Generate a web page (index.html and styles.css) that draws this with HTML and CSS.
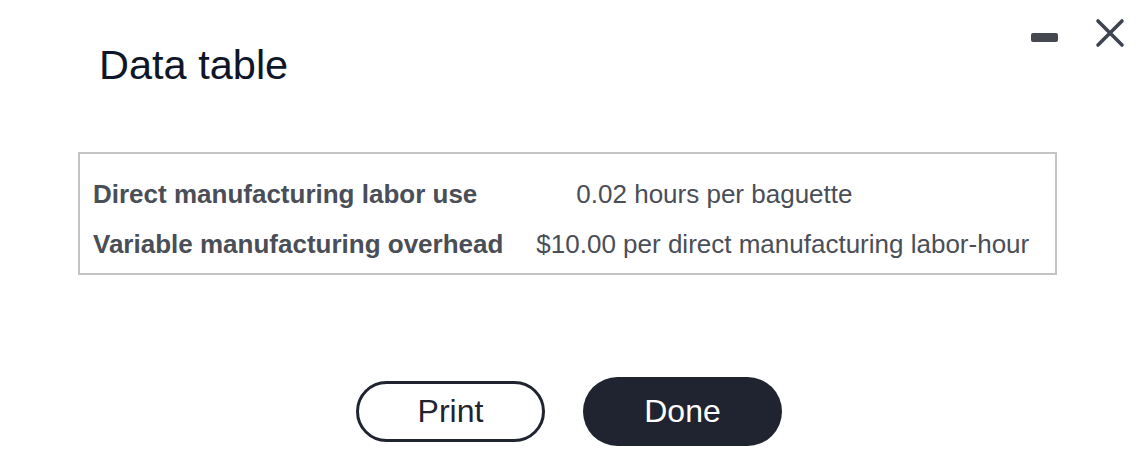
FILE: index.html
```html
<!DOCTYPE html>
<html>
<head>
<meta charset="utf-8">
<link rel="stylesheet" href="styles.css">
</head>
<body>
<div class="dialog">
  <div class="header">
    <h1 class="title">Data table</h1>
    <div class="controls">
      <span class="minimize"></span>
      <svg class="close" width="30" height="30" viewBox="0 0 30 30">
        <path d="M3 3 L27 27 M27 3 L3 27" stroke="#3e4550" stroke-width="3.6" stroke-linecap="round" fill="none"/>
      </svg>
    </div>
  </div>
  <div class="table">
    <div class="label">Direct manufacturing labor use</div>
    <div class="value first">0.02 hours per baguette</div>
    <div class="label">Variable manufacturing overhead</div>
    <div class="value">$10.00 per direct manufacturing labor-hour</div>
  </div>
  <div class="actions">
    <button class="btn print">Print</button>
    <button class="btn done">Done</button>
  </div>
</div>
</body>
</html>
```
FILE: styles.css
```css
html, body {
  margin: 0;
  padding: 0;
  background: #fff;
  font-family: "Liberation Sans", Arial, sans-serif;
}
.dialog {
  width: 1138px;
  height: 468px;
  box-sizing: border-box;
}
.header {
  display: flex;
  justify-content: space-between;
  align-items: flex-start;
}
.title {
  margin: 41px 0 0 99px;
  font-size: 41.5px;
  font-weight: normal;
  color: #0f1628;
  line-height: 48px;
}
.controls {
  display: flex;
  align-items: flex-start;
  gap: 37px;
  margin: 18px 13px 0 0;
}
.minimize {
  display: block;
  width: 27px;
  height: 9px;
  border-radius: 2px;
  background: #45484e;
  margin-top: 15px;
}
.close {
  display: block;
}
.table {
  margin: 63px 0 0 78px;
  width: 979px;
  height: 123px;
  box-sizing: border-box;
  border: 2px solid #c4c4c4;
  display: grid;
  grid-template-columns: auto 1fr;
  column-gap: 33px;
  row-gap: 24px;
  align-content: start;
  padding: 27px 12px 0 13px;
  color: #4a4e57;
  font-size: 26px;
  line-height: 26px;
}
.label {
  font-weight: bold;
}
.value.first {
  padding-left: 40px;
}
.actions {
  display: flex;
  justify-content: center;
  align-items: center;
  gap: 38px;
  margin-top: 102px;
}
.btn {
  font-family: "Liberation Sans", Arial, sans-serif;
  font-size: 32px;
  border-radius: 36px;
  box-sizing: border-box;
  cursor: pointer;
}
.print {
  width: 189px;
  height: 61px;
  border: 3px solid #1f2430;
  background: #fff;
  color: #1f2430;
}
.done {
  width: 199px;
  height: 69px;
  border: none;
  background: #1f2430;
  color: #fff;
}
```
